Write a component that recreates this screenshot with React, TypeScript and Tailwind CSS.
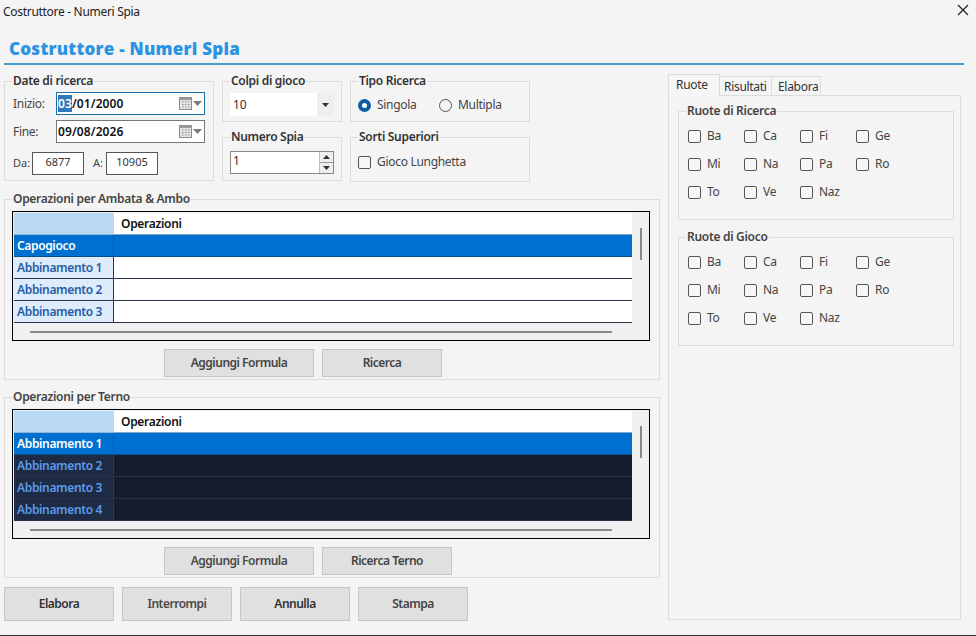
import React from "react";

function Group({ title, className, dark, children }: { title: string; className: string; dark?: boolean; children?: React.ReactNode }) {
  return (
    <div className={`relative border border-[#dcdcdc] ${className}`}>
      <span className={`absolute left-[7px] top-[-8px] bg-[#f4f4f4] px-[1px] text-[12px] leading-[14px] font-semibold tracking-[-0.3px] ${dark ? "text-[#444]" : "text-[#333]"}`}>{title}</span>
      {children}
    </div>
  );
}

function Calendar() {
  return (
    <span className="flex items-center gap-[1px]">
      <svg width="13" height="13" viewBox="0 0 13 13">
        <rect x="0.5" y="0.5" width="12" height="12" fill="#e4e4e4" stroke="#8a8a8a" />
        <rect x="0.5" y="0.5" width="12" height="2.5" fill="#9a9a9a" />
        <path d="M3 5h1.5M6 5h1.5M9 5h1.5M3 7.5h1.5M6 7.5h1.5M9 7.5h1.5M3 10h1.5M6 10h1.5M9 10h1.5" stroke="#8f8f8f" strokeWidth="1.2" />
      </svg>
      <svg width="9" height="5" viewBox="0 0 9 5"><path d="M0 0h9L4.500 5z" fill="#7a7a7a" /></svg>
    </span>
  );
}

function Check({ label, className }: { label?: string; className?: string }) {
  return (
    <label className={`flex items-center gap-[6px] text-[12px] leading-[14px] tracking-[-0.3px] text-[#444] ${className ?? ""}`}>
      <span className="w-[13px] h-[13px] shrink-0 rounded-[2px] border border-[#555] bg-[#f6f6f6]" />
      {label}
    </label>
  );
}

function Wheels({ title }: { title: string }) {
  const names = ["Ba", "Ca", "Fi", "Ge", "Mi", "Na", "Pa", "Ro", "To", "Ve", "Naz"];
  return (
    <Group title={title} dark className="h-[109px] pl-[9px] pt-[13px]">
      <div className="grid grid-cols-[56px_56px_56px_56px] auto-rows-[28px]">
        {names.map((n) => (
          <Check key={n} label={n} className="h-[22px]" />
        ))}
      </div>
    </Group>
  );
}

function GridTable({ rows, dark }: { rows: string[]; dark?: boolean }) {
  return (
    <div className="flex h-[130px] border border-black bg-[#f0f0f0] pl-[1px] pt-[1px]">
      <div className="flex-1 flex flex-col min-w-0">
        <div className="flex h-[22px] bg-white">
          <div className="w-[100px] bg-[#b9d9f3] border-b border-[#8fb7d8]" />
          <div className="flex-1 pl-[7px] text-[12px] leading-[21px] font-semibold tracking-[-0.3px] text-[#111] border-b border-[#7fa9cd]">Operazioni</div>
        </div>
        {rows.map((r, i) => {
          const sel = i === 0;
          return (
            <div key={r} className={`flex h-[22px] border-b ${sel ? "border-[#0b4f8c]" : dark ? "border-[#2b3142]" : "border-[#2a3448]"}`}>
              <div className={`w-[100px] pl-[3px] text-[12px] leading-[21px] font-semibold tracking-[-0.35px] border-r ${sel ? "bg-[#0070d0] text-white border-[#0a5ca8]" : dark ? "bg-[#1f2a44] text-[#5a9bea] border-[#2b3a5c]" : "bg-[#deebfa] text-[#255ba8] border-[#2a3448]"}`}>{r}</div>
              <div className={`flex-1 ${sel ? "bg-[#0070d0]" : dark ? "bg-[#171c2e]" : "bg-white"}`} />
            </div>
          );
        })}
        <div className="flex-1 pl-[16px] pr-[20px] pt-[8px]">
          <div className="h-[2px] bg-[#8a8a8a]" />
        </div>
      </div>
      <div className="w-[17px] pl-[8px] pt-[15px]">
        <div className="w-[2px] h-[32px] bg-[#8a8a8a]" />
      </div>
    </div>
  );
}

function Btn({ label, className }: { label: string; className: string }) {
  return (
    <button className={`flex items-center justify-center bg-[#e0e0e0] border border-[#c6c6c6] text-[12px] font-semibold tracking-[-0.5px] ${className}`}>{label}</button>
  );
}

export default function App() {
  return (
    <div className="w-[976px] h-[636px] overflow-hidden bg-[#f4f4f4] flex flex-col border-b border-[#333] text-[#333]" style={{ fontFamily: '"Noto Sans", sans-serif' }}>
      <div className="h-[24px] flex items-center justify-between pl-[3px] pr-[7px] text-[12px] tracking-[-0.3px] text-[#222]">
        <span>Costruttore - Numeri Spia</span>
        <svg width="12" height="12" viewBox="0 0 12 12" className="mt-[-4px]"><path d="M1 1l10 10M11 1L1 11" stroke="#222" strokeWidth="1.2" /></svg>
      </div>
      <div className="ml-[4px] mr-[12px] mt-[13px] h-[28px] border-b-2 border-[#4a9dca] pl-[5px] text-[17px] leading-[24px] font-extrabold tracking-[0.25px] text-[#2a93e2]" style={{ fontFamily: '"Open Sans", sans-serif' }}>
        Costruttore - Numeri Spia
      </div>

      <div className="flex pl-[4px] pt-[9px] gap-[8px]">
        <div className="w-[656px] flex flex-col">
          <div className="flex gap-[8px] pt-[7px]">
            <Group title="Date di ricerca" className="w-[210px] h-[100px] px-[8px] pt-[10px]">
              <div className="flex items-center h-[23px] text-[12px] tracking-[-0.3px] text-[#444]">
                <span className="w-[43px]">Inizio:</span>
                <div className="flex-1 h-[23px] border border-[#1f6fa8] bg-white flex items-center justify-between pl-[1px] pr-[2px] text-[12px] font-semibold tracking-[0.1px] text-[#111]">
                  <span><span className="bg-[#2f78bb] text-white">03</span>/01/2000</span>
                  <Calendar />
                </div>
              </div>
              <div className="flex items-center h-[23px] mt-[5px] text-[12px] tracking-[-0.3px] text-[#444]">
                <span className="w-[43px]">Fine:</span>
                <div className="flex-1 h-[23px] border border-[#777] bg-white flex items-center justify-between pl-[1px] pr-[2px] text-[12px] font-semibold tracking-[0.1px] text-[#111]">
                  <span>09/08/2026</span>
                  <Calendar />
                </div>
              </div>
              <div className="flex items-center mt-[9px] text-[11px] text-[#444]">
                <span className="w-[19px]">Da:</span>
                <div className="w-[52px] h-[23px] border border-[#555] bg-white text-center leading-[17px] text-[#333]">6877</div>
                <span className="ml-[9px] w-[13px]">A:</span>
                <div className="w-[52px] h-[23px] border border-[#555] bg-white text-center leading-[17px] text-[#333]">10905</div>
              </div>
            </Group>

            <div className="w-[120px] flex flex-col gap-[15px]">
              <Group title="Colpi di gioco" className="h-[41px] px-[7px] pt-[11px]">
                <div className="flex h-[23px] bg-white items-center text-[12px] text-[#333]">
                  <span className="flex-1 pl-[3px]">10</span>
                  <span className="w-[17px] h-full bg-[#eeeeee] flex items-center justify-center">
                    <svg width="7" height="4" viewBox="0 0 7 4"><path d="M0 0h7L3.500 4z" fill="#333" /></svg>
                  </span>
                </div>
              </Group>
              <Group title="Numero Spia" className="h-[44px] px-[7px] pt-[13px]">
                <div className="flex h-[23px] bg-white border border-[#888] items-center text-[12px] text-[#333]">
                  <span className="flex-1 pl-[2px] pb-[3px]">1</span>
                  <span className="w-[14px] h-full flex flex-col border-l border-[#bbb]">
                    <span className="flex-1 bg-[#eee] border-b border-[#999] flex items-center justify-center">
                      <svg width="7" height="4" viewBox="0 0 7 4"><path d="M3.500 0L7 4H0z" fill="#333" /></svg>
                    </span>
                    <span className="flex-1 bg-[#eee] flex items-center justify-center">
                      <svg width="7" height="4" viewBox="0 0 7 4"><path d="M0 0h7L3.500 4z" fill="#333" /></svg>
                    </span>
                  </span>
                </div>
              </Group>
            </div>

            <div className="w-[180px] flex flex-col gap-[15px]">
              <Group title="Tipo Ricerca" className="h-[41px] pl-[7px] pt-[16px]">
                <div className="flex items-center text-[12px] leading-[14px] tracking-[-0.3px] text-[#444]">
                  <span className="w-[13px] h-[13px] rounded-full border-[4px] border-[#0a5ea8] bg-white" />
                  <span className="ml-[6px] w-[62px]">Singola</span>
                  <span className="w-[13px] h-[13px] rounded-full border border-[#555]" />
                  <span className="ml-[6px]">Multipla</span>
                </div>
              </Group>
              <Group title="Sorti Superiori" className="h-[45px] pl-[7px] pt-[17px]">
                <Check label="Gioco Lunghetta" />
              </Group>
            </div>
          </div>

          <Group title="Operazioni per Ambata &amp; Ambo" dark className="mt-[17px] h-[181px] pl-[7px] pr-[9px] pt-[11px]">
            <GridTable rows={["Capogioco", "Abbinamento 1", "Abbinamento 2", "Abbinamento 3"]} />
            <div className="flex gap-[8px] pl-[152px] pt-[8px]">
              <Btn label="Aggiungi Formula" className="w-[150px] h-[28px] text-[#444]" />
              <Btn label="Ricerca" className="w-[120px] h-[28px] text-[#444]" />
            </div>
          </Group>

          <Group title="Operazioni per Terno" dark className="mt-[17px] h-[181px] pl-[7px] pr-[9px] pt-[11px]">
            <GridTable dark rows={["Abbinamento 1", "Abbinamento 2", "Abbinamento 3", "Abbinamento 4"]} />
            <div className="flex gap-[8px] pl-[152px] pt-[8px]">
              <Btn label="Aggiungi Formula" className="w-[150px] h-[28px] text-[#4a4a4a]" />
              <Btn label="Ricerca Terno" className="w-[130px] h-[28px] text-[#444]" />
            </div>
          </Group>

          <div className="flex gap-[8px] pt-[9px]">
            <Btn label="Elabora" className="w-[110px] h-[34px] text-[#333]" />
            <Btn label="Interrompi" className="w-[110px] h-[34px] text-[#4a4a4a]" />
            <Btn label="Annulla" className="w-[110px] h-[34px] text-[#333]" />
            <Btn label="Stampa" className="w-[110px] h-[34px] text-[#444]" />
          </div>
        </div>

        <div className="w-[293px] flex flex-col">
          <div className="flex h-[22px] text-[12px] tracking-[-0.3px] text-[#333] relative z-10">
            <div className="w-[52px] bg-[#f6f6f6] border border-b-0 border-[#dcdcdc] pl-[7px] leading-[19px]">Ruote</div>
            <div className="w-[52px] mt-[2px] border-t border-r border-[#dcdcdc] pl-[4px] leading-[19px]">Risultati</div>
            <div className="w-[49px] mt-[2px] border-t border-r border-[#dcdcdc] pl-[6px] leading-[19px]">Elabora</div>
          </div>
          <div className="w-[293px] h-[525px] border border-[#dcdcdc] mt-[-1px] pl-[9px] pr-[6px] pt-[15px] flex flex-col gap-[17px]">
            <Wheels title="Ruote di Ricerca" />
            <Wheels title="Ruote di Gioco" />
          </div>
        </div>
      </div>
    </div>
  );
}
